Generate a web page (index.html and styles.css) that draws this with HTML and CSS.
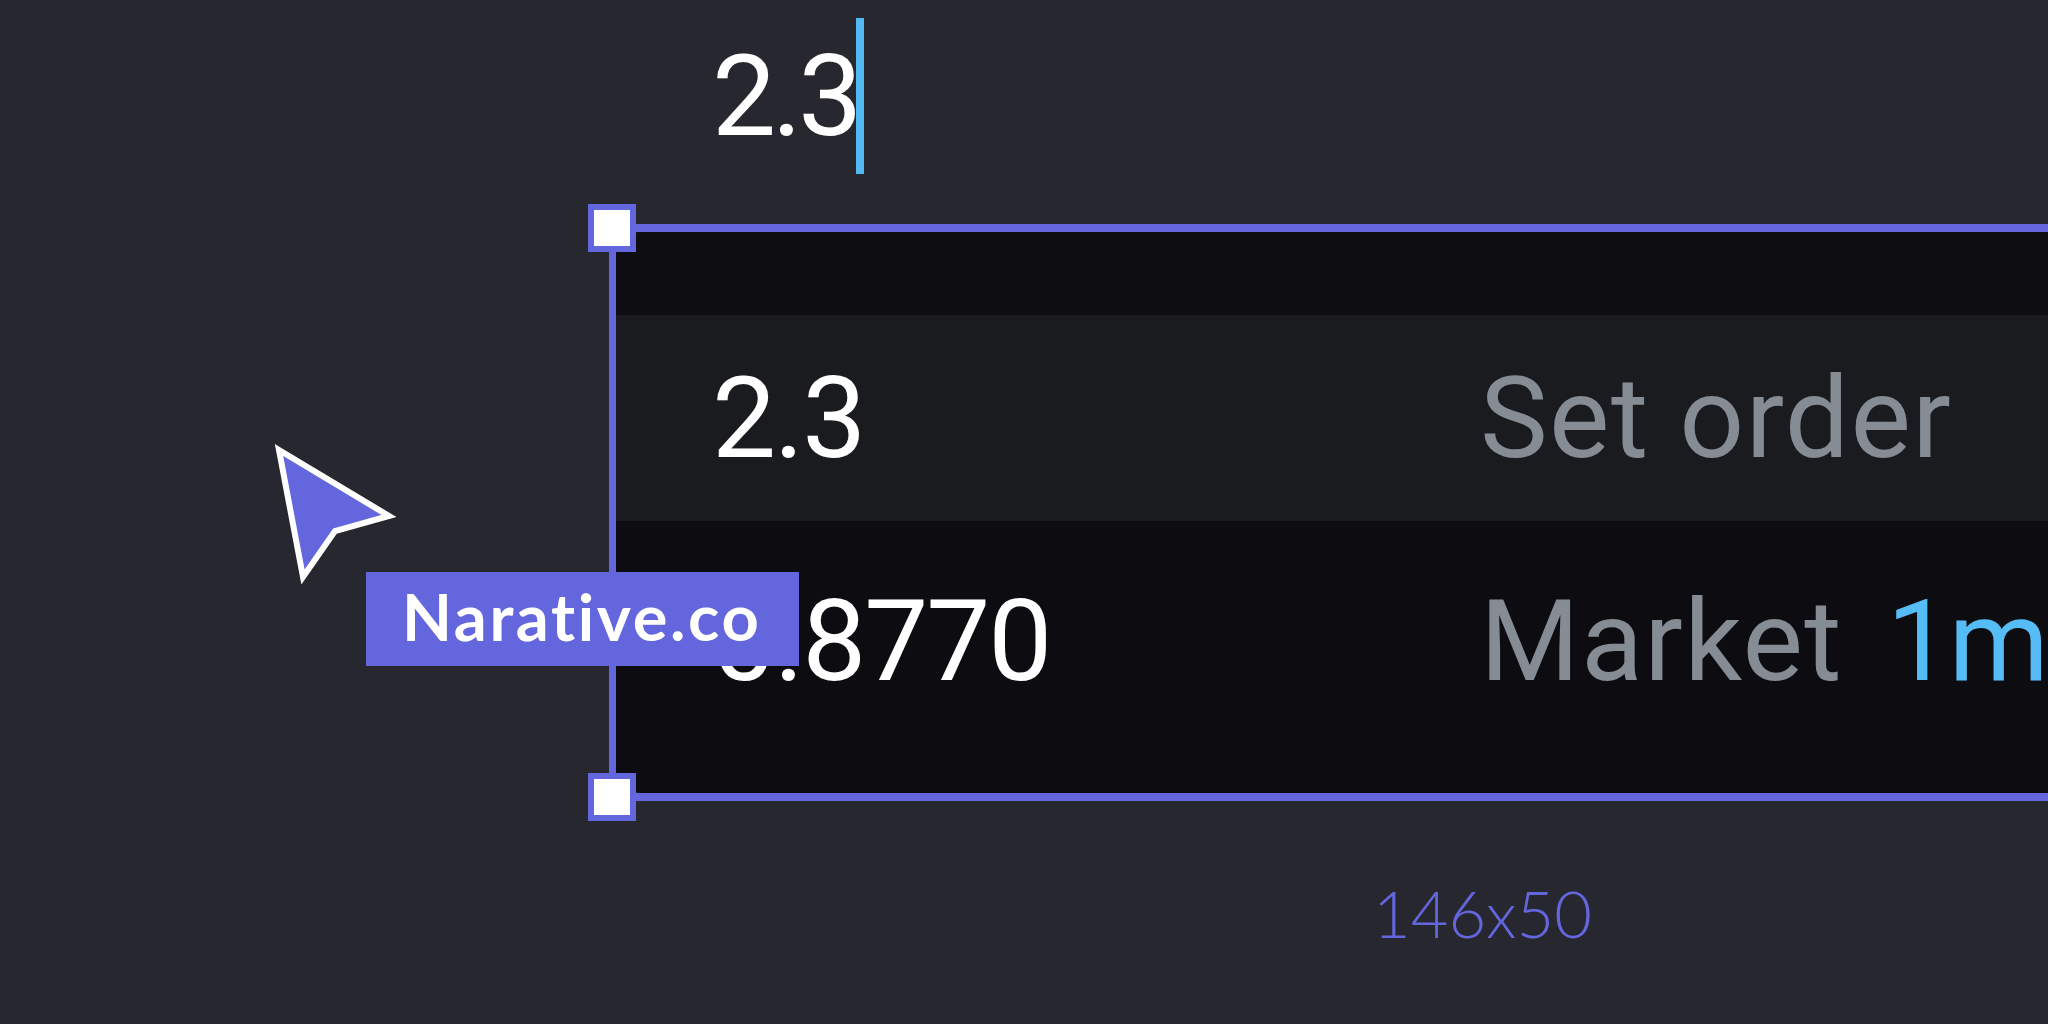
FILE: index.html
```html
<!DOCTYPE html>
<html lang="en">
<head>
<meta charset="utf-8">
<title>Narative.co</title>
<link rel="stylesheet" href="styles.css">
</head>
<body>
<div class="canvas">
  <div class="input"><span class="value">2.3</span><span class="caret"></span></div>
  <div class="card">
    <div class="card-head"></div>
    <div class="row row-light"><span class="num">2.3</span><span class="label">Set order</span></div>
    <div class="row row-dark"><span class="num">0.8770</span><span class="label">Market <span class="accent">1m</span></span></div>
  </div>
  <div class="dims">146x50</div>
  <div class="selection"><span class="handle tl"></span><span class="handle bl"></span></div>
  <svg class="pointer" width="160" height="170" viewBox="0 0 160 170"><polygon points="19,20 129,86 75,101 43,147" fill="#6366dc" stroke="#ffffff" stroke-width="6" stroke-linejoin="miter"/></svg>
  <div class="tag">Narative.co</div>
</div>
</body>
</html>
```
FILE: styles.css
```css
html, body {
  margin: 0;
  padding: 0;
  background: #27272f;
}
.canvas {
  position: relative;
  width: 2048px;
  height: 1024px;
  overflow: hidden;
  font-family: Roboto, "Liberation Sans", sans-serif;
}
.input {
  display: flex;
  margin-left: 712px;
  padding-top: 18px;
  height: 156px;
  line-height: 156px;
  font-size: 114px;
  color: #ffffff;
  letter-spacing: -4px;
}
.caret {
  display: block;
  width: 8px;
  height: 156px;
  margin-left: -2px;
  background: #52b9f3;
}
.card {
  margin-left: 615px;
  margin-top: 58px;
  width: 1600px;
  border-radius: 28px;
  overflow: hidden;
  background: #0d0d11;
}
.card-head {
  height: 83px;
  background: #0e0e12;
}
.row {
  display: grid;
  grid-template-columns: 768px 1fr;
  padding-left: 97px;
  box-sizing: border-box;
  font-size: 114px;
  line-height: 206px;
  white-space: nowrap;
}
.row-light {
  height: 206px;
  background: #1a1b1f;
}
.row-dark {
  height: 272px;
  padding-top: 17px;
  background: #0d0d11;
}
.num {
  color: #ffffff;
  letter-spacing: -2px;
}
.label {
  color: #858c94;
  letter-spacing: 1.4px;
}
.accent {
  color: #56bcf6;
  margin-left: 14px;
  letter-spacing: -2px;
}
.dims {
  margin-left: 1373px;
  margin-top: 70px;
  line-height: 100px;
  font-family: Lato, "Open Sans", sans-serif;
  font-weight: 300;
  font-size: 65px;
  color: #6366dc;
}
.selection {
  position: absolute;
  left: 609px;
  top: 224px;
  width: 1600px;
  height: 577px;
  box-sizing: border-box;
  border: 7px solid #6366dc;
  border-top-width: 8px;
  border-bottom-width: 8px;
  border-right: none;
}
.handle {
  position: absolute;
  left: -28px;
  width: 48px;
  height: 48px;
  box-sizing: border-box;
  border: 6px solid #6366dc;
  background: #ffffff;
}
.handle.tl { top: -28px; }
.handle.bl { bottom: -28px; }
.pointer {
  position: absolute;
  left: 260px;
  top: 430px;
}
.tag {
  position: absolute;
  left: 366px;
  top: 572px;
  width: 433px;
  height: 94px;
  box-sizing: border-box;
  padding-left: 36px;
  background: #6366dc;
  color: #ffffff;
  font-family: Lato, "Open Sans", sans-serif;
  font-weight: 700;
  font-size: 65px;
  line-height: 88px;
  letter-spacing: 2.6px;
  white-space: nowrap;
}
```
